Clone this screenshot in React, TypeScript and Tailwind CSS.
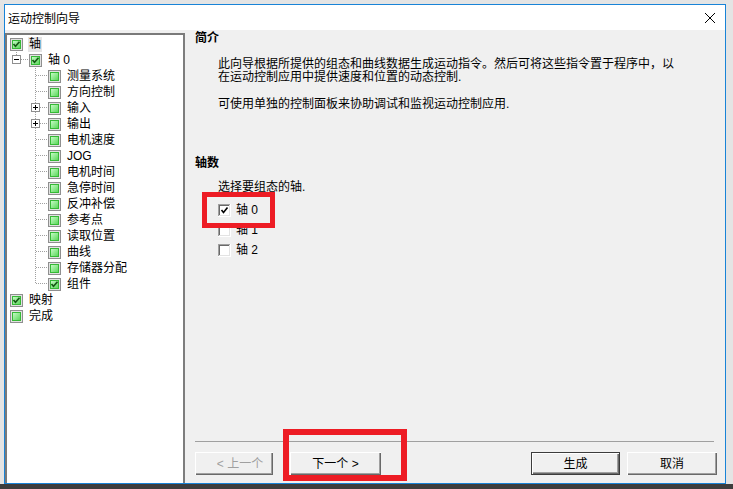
import React from "react";

type Row = { l: 0 | 1 | 2; t: string; c?: boolean; exp?: "+" | "-"; last?: boolean; sel?: boolean };

const rows: Row[] = [
  { l: 0, t: "轴", c: true, sel: true },
  { l: 1, t: "轴 0", c: true, exp: "-" },
  { l: 2, t: "测量系统" },
  { l: 2, t: "方向控制" },
  { l: 2, t: "输入", exp: "+" },
  { l: 2, t: "输出", exp: "+" },
  { l: 2, t: "电机速度" },
  { l: 2, t: "JOG" },
  { l: 2, t: "电机时间" },
  { l: 2, t: "急停时间" },
  { l: 2, t: "反冲补偿" },
  { l: 2, t: "参考点" },
  { l: 2, t: "读取位置" },
  { l: 2, t: "曲线" },
  { l: 2, t: "存储器分配" },
  { l: 2, t: "组件", c: true, last: true },
  { l: 0, t: "映射", c: true },
  { l: 0, t: "完成" },
];

function GreenBox({ checked }: { checked?: boolean }) {
  return (
    <svg width="13" height="13" viewBox="0 0 13 13" className="shrink-0">
      <defs>
        <linearGradient id="gg" x1="0" y1="0" x2="1" y2="1">
          <stop offset="0" stopColor="#c4fac4" />
          <stop offset="1" stopColor="#5cd85c" />
        </linearGradient>
      </defs>
      <rect x="0" y="0" width="13" height="13" fill="#8f8f8f" />
      <rect x="1" y="1" width="11" height="11" fill="#e2e2e2" />
      <rect x="2" y="2" width="9" height="9" fill="#36b936" />
      <rect x="3" y="3" width="7" height="7" fill="url(#gg)" />
      {checked && (
        <polyline points="3.5,6 5.5,8.3 9.5,3.8" fill="none" stroke="#175a17" strokeWidth="1.7" />
      )}
    </svg>
  );
}

function ExpBox({ x, sign }: { x: number; sign: "+" | "-" }) {
  return (
    <g>
      <rect x={x - 3.5} y={3.5} width="8" height="8" fill="#fff" stroke="#8f8f8f" />
      <line x1={x - 2} y1={7.5} x2={x + 3} y2={7.5} stroke="#000" />
      {sign === "+" && <line x1={x + 0.5} y1={5} x2={x + 0.5} y2={10} stroke="#000" />}
    </g>
  );
}

function Gutter({ r }: { r: Row }) {
  const dot = { stroke: "#a0a0a0", strokeDasharray: "1 1" } as const;
  if (r.l === 0) return <div className="w-[3px] shrink-0" />;
  if (r.l === 1) {
    return (
      <svg width="22" height="16" className="shrink-0">
        <line x1="9.5" y1="0" x2="9.5" y2="3" {...dot} />
        <ExpBox x={9} sign="-" />
        <line x1="14" y1="7.5" x2="22" y2="7.5" {...dot} />
      </svg>
    );
  }
  return (
    <svg width="41" height="16" className="shrink-0">
      {r.exp ? (
        <>
          <line x1="28.5" y1="0" x2="28.5" y2="3" {...dot} />
          <ExpBox x={28} sign="+" />
          <line x1="28.5" y1="12" x2="28.5" y2="16" {...dot} />
          <line x1="33" y1="7.5" x2="41" y2="7.5" {...dot} />
        </>
      ) : (
        <>
          <line x1="28.5" y1="0" x2="28.5" y2={r.last ? 8 : 16} {...dot} />
          <line x1="29" y1="7.5" x2="41" y2="7.5" {...dot} />
        </>
      )}
    </svg>
  );
}

function SunkenCheck({ checked }: { checked?: boolean }) {
  return (
    <svg width="13" height="13" viewBox="0 0 13 13" className="shrink-0">
      <rect x="0" y="0" width="13" height="13" fill="#ffffff" />
      <rect x="0" y="0" width="12" height="12" fill="#a0a0a0" />
      <rect x="1" y="1" width="11" height="11" fill="#e3e3e3" />
      <rect x="1" y="1" width="10" height="10" fill="#696969" />
      <rect x="2" y="2" width="9" height="9" fill="#ffffff" />
      {checked && (
        <polyline points="3.5,6 5.5,8.5 9.5,3.5" fill="none" stroke="#000" strokeWidth="1.6" />
      )}
    </svg>
  );
}

const btn =
  "h-[23px] flex items-center justify-center text-[12px] leading-none bg-[#f0f0f0] shadow-[inset_1px_1px_0_#ffffff,inset_-1px_-1px_0_#696969,inset_-2px_-2px_0_#a0a0a0]";

export default function App() {
  return (
    <div className="w-[733px] h-[489px] overflow-hidden bg-[#e4e4e4] flex flex-col font-['Liberation_Sans','Noto_Sans_CJK_SC',sans-serif] text-black relative">
      <div className="pt-[4px] pl-[4px] flex">
        <div className="w-[722px] h-[480px] border border-[#1883d7] flex flex-col bg-[#f0f0f0]">
          {/* title bar */}
          <div className="h-[25px] bg-white flex items-center justify-between pl-[3px] pr-[9px]">
            <span className="text-[12px] leading-none font-['Noto_Sans_CJK_SC',sans-serif]">运动控制向导</span>
            <svg width="12" height="12" viewBox="0 0 12 12">
              <path d="M1 1 L11 11 M11 1 L1 11" stroke="#000" strokeWidth="1" />
            </svg>
          </div>
          {/* body */}
          <div className="flex-1 flex">
            {/* tree */}
            <div className="w-[180px] mt-[3px] pt-[1px] bg-white border-l-2 border-t-2 border-r-2 border-l-[#7a7a7a] border-t-[#7a7a7a] border-r-[#7d7d7d] flex flex-col">
              {rows.map((r, i) => (
                <div key={i} className="h-[16px] flex items-center">
                  <Gutter r={r} />
                  <GreenBox checked={r.c} />
                  <span
                    className={`ml-[5px] text-[12px] leading-[15px] px-px ${r.sel ? "bg-[#e5e5e5]" : ""}`}
                  >
                    {r.t}
                  </span>
                </div>
              ))}
            </div>
            {/* right panel */}
            <div className="flex-1 flex flex-col pl-[10px] pr-[8px]">
              <div className="h-[16px] flex items-center text-[12px] font-bold leading-none">简介</div>
              <div className="ml-[23px] mt-[12px] text-[12px] leading-[13px]">
                <p>此向导根据所提供的组态和曲线数据生成运动指令。然后可将这些指令置于程序中，以</p>
                <p>在运动控制应用中提供速度和位置的动态控制.</p>
                <p className="mt-[14px]">可使用单独的控制面板来协助调试和监视运动控制应用.</p>
              </div>
              <div className="mt-[44px] h-[16px] flex items-center text-[12px] font-bold leading-none">轴数</div>
              <div className="ml-[23px] mt-[10px] text-[12px] leading-[12px]">选择要组态的轴.</div>
              <div className="ml-[23px] mt-[7px] flex flex-col">
                {["轴 0", "轴 1", "轴 2"].map((t, i) => (
                  <div key={t} className="h-[20px] flex items-center gap-[5px]">
                    <SunkenCheck checked={i === 0} />
                    <span className="text-[12px] leading-none">{t}</span>
                  </div>
                ))}
              </div>
              <div className="flex-1" />
              <div className="h-px bg-[#a0a0a0] mr-[3px]" />
              <div className="mt-[10px] mb-[8px] flex items-center">
                <div className={`${btn} w-[78px] pl-[12px] text-[#a0a0a0]`}>&lt; 上一个</div>
                <div className={`${btn} w-[91px] ml-[17px]`}>下一个 &gt;</div>
                <div className="flex-1" />
                <div className={`${btn} w-[89px] border border-[#3c3c3c]`}>生成</div>
                <div className={`${btn} w-[90px] ml-[7px]`}>取消</div>
              </div>
            </div>
          </div>
        </div>
      </div>
      <div className="flex-1 bg-[#3d3d3d]" />
      {/* red annotation boxes */}
      <div className="absolute left-[202px] top-[192px] w-[73px] h-[36px] border-[5px] border-[#ed1c24]" />
      <div className="absolute left-[283px] top-[429px] w-[124px] h-[52px] border-[6px] border-[#ed1c24]" />
    </div>
  );
}
